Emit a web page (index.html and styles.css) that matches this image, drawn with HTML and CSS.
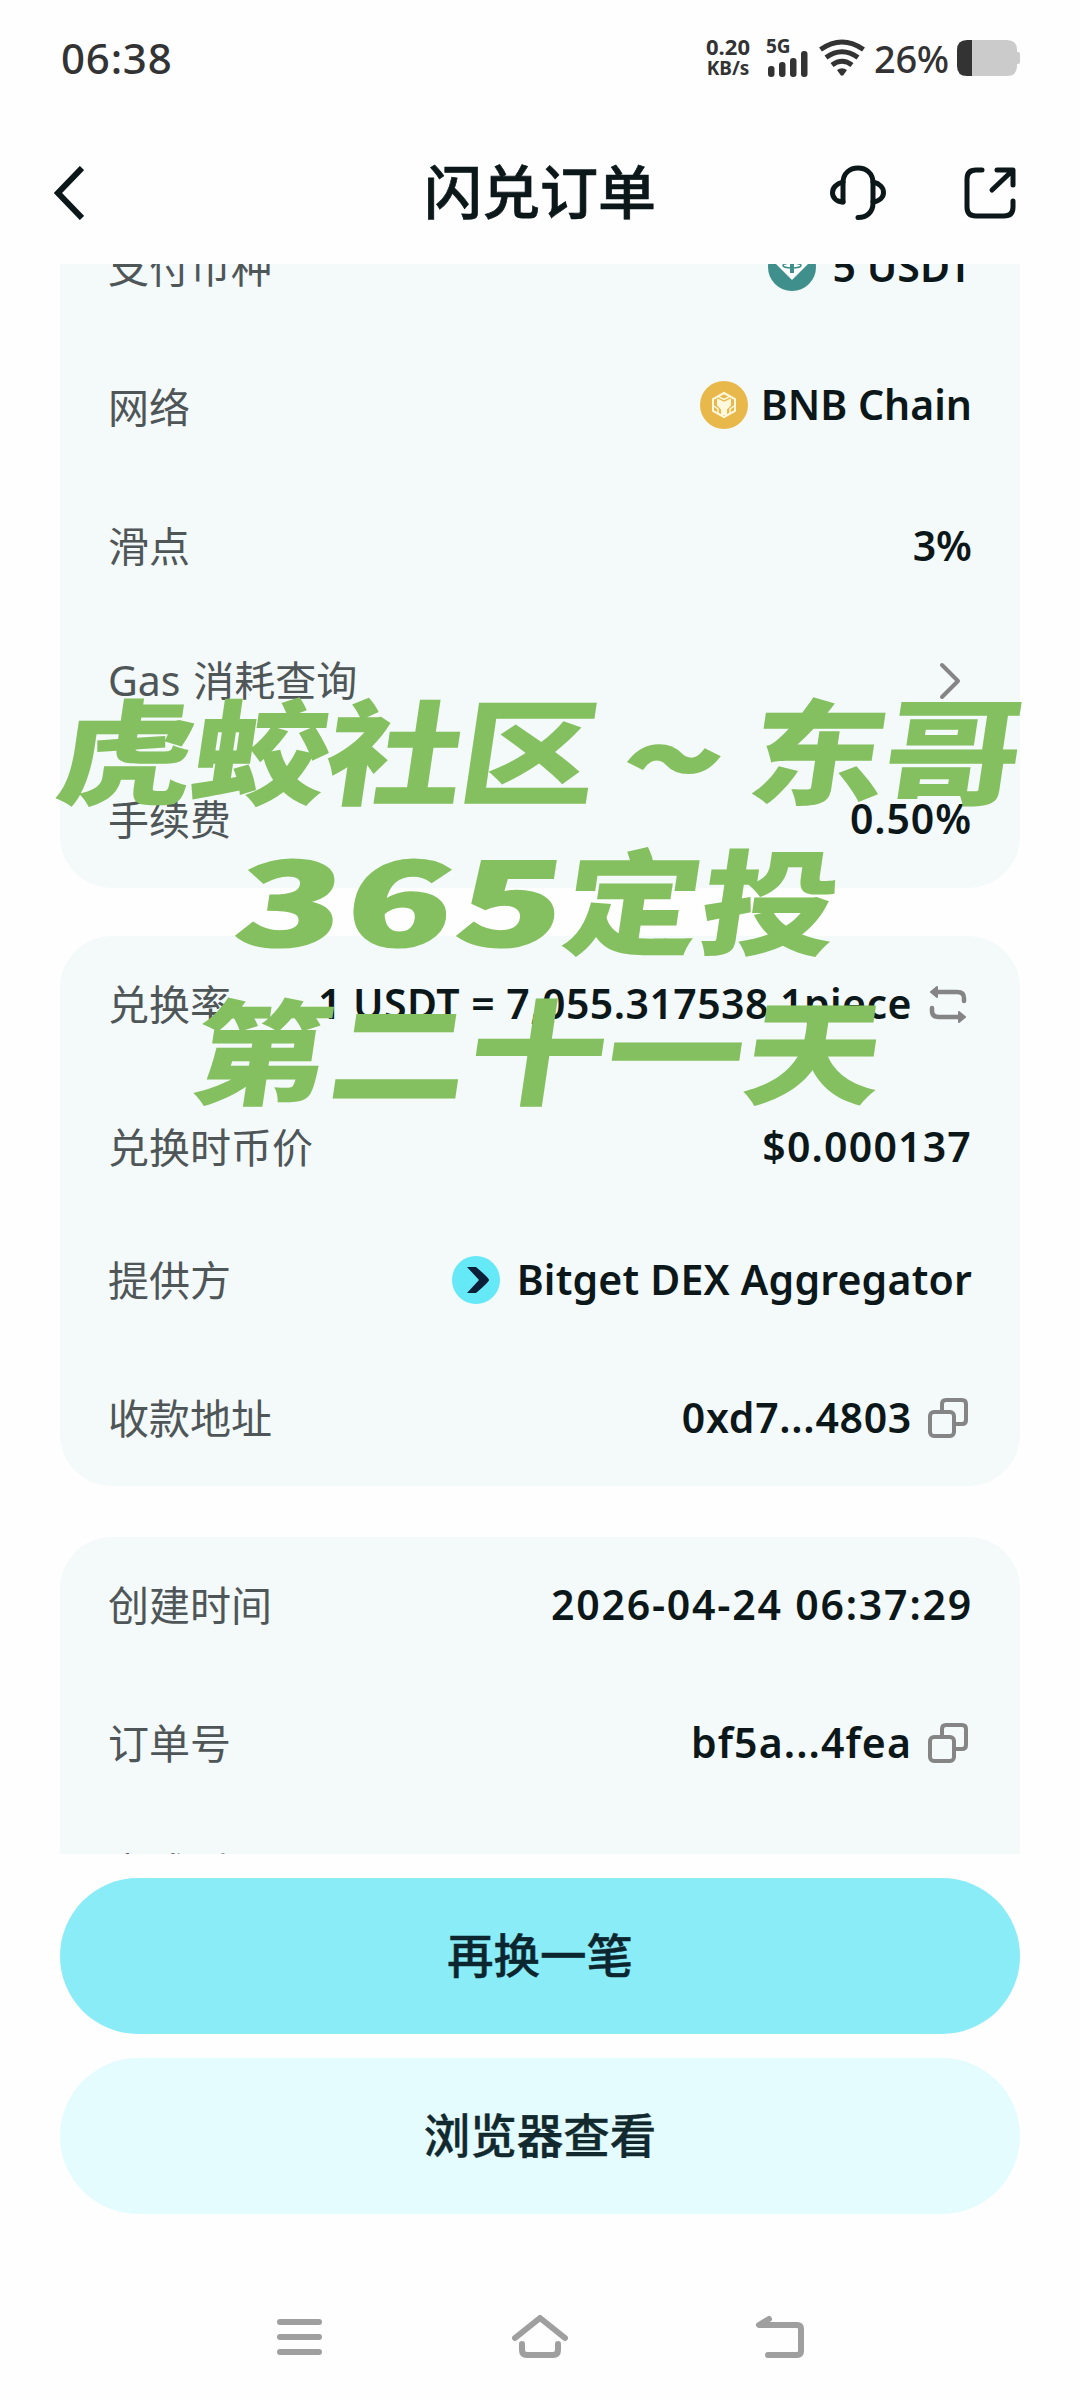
FILE: index.html
```html
<!DOCTYPE html>
<html lang="zh-CN">
<head>
<meta charset="utf-8">
<title>闪兑订单</title>
<link rel="stylesheet" href="styles.css">
</head>
<body>
<div class="screen">
  <header class="status">
    <span class="clock">06:38</span>
    <div class="status-right">
      <div class="speed"><span class="speed-num">0.20</span><span class="speed-unit">KB/s</span></div>
      <div class="signal">
        <span class="gen">5G</span>
        <svg width="40" height="26" viewBox="0 0 40 26" fill="#333"><rect x="0" y="15" width="6.5" height="11" rx="3"/><rect x="11" y="11" width="6.5" height="15" rx="3"/><rect x="22" y="7" width="6.5" height="19" rx="3"/><rect x="33" y="0" width="6.5" height="26" rx="3"/></svg>
      </div>
      <svg class="wifi" width="46" height="38" viewBox="0 0 46 38" fill="none" stroke="#333" stroke-width="5"><path d="M1.500 10.500Q23-4.500 44.500 10.500"/><path d="M7 18.500Q23 7 39 18.500"/><path d="M13 26Q23 18.500 33 26"/><path d="M18 31Q23 27.500 28 31L24.500 36Q23 37.500 21.500 36Z" fill="#333" stroke="none"/></svg>
      <span class="percent">26%</span>
      <svg class="battery" width="63" height="36" viewBox="0 0 63 36"><path d="M10 0H50Q60 0 60 10V12Q63 12 63 14V22Q63 24 60 24V26Q60 36 50 36H10Z" fill="#cbcbcb"/><path d="M15 0H10Q0 0 0 10V26Q0 36 10 36H15Z" fill="#333"/></svg>
    </div>
  </header>
  <nav class="topbar">
    <svg width="30" height="54" viewBox="0 0 30 54" fill="none" stroke="#0b1719" stroke-width="6"><path d="M28 2L4 27L28 52"/></svg>
    <h1>闪兑订单</h1>
    <div class="actions">
      <svg width="56" height="56" viewBox="0 0 56 56" fill="none" stroke="#0b1719" stroke-width="5" stroke-linecap="round" stroke-linejoin="round"><path d="M13 37V18C13 8 20 3 28 3S43 8 43 18V38C43 47 37 52.500 28 52.500"/><path d="M13 17C-1 20-1 36 13 37M43 17C57 20 57 35 43 37"/></svg>
      <svg width="52" height="52" viewBox="0 0 52 52" fill="none" stroke="#0b1719" stroke-width="5" stroke-linecap="round" stroke-linejoin="round"><path d="M18 3H12Q3 3 3 12V40Q3 49 12 49H40Q49 49 49 40V34M33 3H49V18M48 4L28 23"/></svg>
    </div>
  </nav>
  <main class="scroll">
    <section class="card first">
      <div class="row"><span class="label">支付币种</span><span class="value v-usdt">
        <svg class="coin" width="48" height="48" viewBox="0 0 48 48"><circle cx="24" cy="24" r="24" fill="#3f8f8c"/><path d="M12 10H36L41 20L24 37L7 20Z" fill="#fff"/><path d="M16 14H32V19H26V30H22V19H16Z" fill="#3f8f8c"/><ellipse cx="24" cy="22.500" rx="9" ry="2.500" fill="none" stroke="#3f8f8c" stroke-width="1.500"/></svg><b>5 USDT</b></span></div>
      <div class="row network"><span class="label">网络</span><span class="value v-bnb">
        <svg class="coin" width="48" height="48" viewBox="0 0 48 48" fill="none" stroke="#fff8dc" stroke-width="2"><circle cx="24" cy="24" r="24" fill="#e8b84a" stroke="none"/><path d="M24 12L35 18V30L24 36L13 30V18Z"/><path d="M18 19L24 22L30 19V24L26 28V33H22V28L18 24Z" fill="#fff8dc"/><path d="M19 16L24 18.500L29 16M14 25L18 28V32M34 25L30 28V32" stroke-width="1.500"/></svg><b>BNB Chain</b></span></div>
      <div class="row slip"><span class="label">滑点</span><span class="value v-slip"><b>3%</b></span></div>
      <div class="row gas"><span class="label">Gas 消耗查询</span><svg class="more" width="22" height="38" viewBox="0 0 22 38" fill="none" stroke="#858585" stroke-width="4" stroke-linecap="round" stroke-linejoin="round"><path d="M3 3L19 19L3 35"/></svg></div>
      <div class="row"><span class="label">手续费</span><span class="value v-fee"><b>0.50%</b></span></div>
    </section>
    <section class="card second">
      <div class="row"><span class="label">兑换率</span><span class="value v-rate"><b>1 USDT = 7,055.317538 1piece</b>
        <svg class="tail" width="40" height="40" viewBox="0 0 40 40" fill="none" stroke="#858585" stroke-width="4.500" stroke-linecap="round"><path d="M7 8H29Q36 8 36 14V17M33 33H11Q4 33 4 27V24"/><path d="M3 8L9 3V13ZM37 33L31 28V38Z" fill="#858585" stroke-width="2" stroke-linejoin="round"/></svg></span></div>
      <div class="row price"><span class="label">兑换时币价</span><span class="value v-price"><b>$0.000137</b></span></div>
      <div class="row provider"><span class="label">提供方</span><span class="value v-dex">
        <svg class="coin" width="48" height="48" viewBox="0 0 48 48"><circle cx="24" cy="24" r="24" fill="#66e9f6"/><path d="M15 11H24Q37 22 37 24Q37 26 24 37H15L27 24Z" fill="#0b1f38"/></svg><b>Bitget DEX Aggregator</b></span></div>
      <div class="row"><span class="label">收款地址</span><span class="value v-addr"><b>0xd7...4803</b>
        <svg class="tail" width="40" height="40" viewBox="0 0 40 40" fill="none" stroke="#858585" stroke-width="4"><rect x="2" y="14" width="24" height="24" rx="4"/><path d="M14 13V6Q14 2 18 2H34Q38 2 38 6V22Q38 26 34 26H27"/></svg></span></div>
    </section>
    <section class="card third">
      <div class="row"><span class="label">创建时间</span><span class="value v-date"><b>2026-04-24 06:37:29</b></span></div>
      <div class="row"><span class="label">订单号</span><span class="value v-order"><b>bf5a...4fea</b>
        <svg class="tail" width="40" height="40" viewBox="0 0 40 40" fill="none" stroke="#858585" stroke-width="4"><rect x="2" y="14" width="24" height="24" rx="4"/><path d="M14 13V6Q14 2 18 2H34Q38 2 38 6V22Q38 26 34 26H27"/></svg></span></div>
      <div class="row last"><span class="label">完成时间</span></div>
    </section>
  </main>
  <footer class="buttons">
    <button class="btn primary">再换一笔</button>
    <button class="btn secondary">浏览器查看</button>
  </footer>
  <nav class="sysnav">
    <svg width="56" height="44" viewBox="0 0 56 44" stroke="#9f9f9f" stroke-width="6" stroke-linecap="round"><path d="M8 7H47M8 22H47M8 37H47"/></svg>
    <svg width="56" height="44" viewBox="0 0 56 44" fill="none" stroke="#9f9f9f" stroke-width="6" stroke-linecap="round" stroke-linejoin="round"><path d="M3 23L28 3L53 23M10 29V35Q10 40 15 40H41Q46 40 46 35V29"/></svg>
    <svg width="56" height="44" viewBox="0 0 56 44" fill="none" stroke="#9f9f9f" stroke-width="6" stroke-linecap="round" stroke-linejoin="round"><path d="M17 4L7 10H45Q49 10 49 14V36Q49 40 45 40H16"/></svg>
  </nav>
  <div class="stamp">
    <p class="s1">虎蛟社区<span class="wave">～</span>东哥</p>
    <p class="s2"><span class="digits">365</span>定投</p>
    <p class="s3">第二十一天</p>
  </div>
</div>
</body>
</html>
```
FILE: styles.css
```css
* { box-sizing: border-box; }
body { margin: 0; background: #fefefe; font-family: "Noto Sans", "Noto Sans CJK SC", sans-serif; color: #0b1719; }
svg { display: block; flex: none; }
.screen { position: relative; width: 1080px; height: 2400px; overflow: hidden; display: flex; flex-direction: column; }

.status { height: 116px; padding: 0 60px; display: flex; justify-content: space-between; align-items: center; color: #333; font-weight: 500; }
.clock { font-size: 42px; line-height: 60px; letter-spacing: 0.8px; font-weight: 550; padding-left: 1px; margin-top: -1px; }
.status-right { display: flex; align-items: center; }
.speed { width: 46px; display: flex; flex-direction: column; align-items: center; font-weight: 700; margin-right: 17px; margin-top: -3px; }
.speed-num { font-size: 22px; line-height: 22px; }
.speed-unit { font-size: 19px; line-height: 22px; }
.signal { width: 42px; height: 38px; display: flex; flex-direction: column; margin-right: 9px; }
.gen { font-size: 19px; line-height: 15px; height: 12px; font-weight: 700; margin-left: -2px; }
.wifi { margin-right: 9px; }
.percent { width: 74px; font-size: 38px; line-height: 50px; margin-right: 9px; letter-spacing: -0.3px; }

.topbar { height: 148px; padding: 6px 65px 0 54px; display: grid; grid-template-columns: 1fr auto 1fr; align-items: center; }
.topbar h1 { margin: -8px 0 0 11px; font: 500 58px/80px "Noto Sans CJK SC", sans-serif; -webkit-text-stroke: 0.7px #0b1719; }
.actions { display: flex; justify-content: flex-end; align-items: center; gap: 78px; margin-right: -1px; }

.scroll { height: 1590px; padding: 0 60px; overflow: hidden; }
.card { background: #f4f9fa; padding: 0 48px; }
.first { height: 624px; border-radius: 0 0 52px 52px; overflow: hidden; }
.first .row:first-child { margin-top: -21px; }
.second { height: 550px; margin-top: 48px; border-radius: 52px; padding-top: 44px; }
.third { height: 400px; margin-top: 51px; border-radius: 52px; padding-top: 44px; }
.row { height: 48px; margin-top: 90px; display: flex; align-items: center; justify-content: space-between; }
.second .row:first-child, .third .row:first-child { margin-top: 0; }
.row.slip { margin-top: 93px; }
.row.gas { margin-top: 87px; }
.row.price { margin-top: 95px; }
.row.provider { margin-top: 85px; }
.row.last { margin-top: 81px; }
.label { font: 400 41px/48px "Noto Sans", "Noto Sans CJK SC", sans-serif; color: #4f5657; white-space: nowrap; }
.network .label { padding-top: 3px; }
.gas .label { word-spacing: 2px; margin-top: -2px; }
.value { display: flex; align-items: center; white-space: nowrap; }
.value b { font-size: 41px; line-height: 48px; font-weight: 600; margin-top: -2px; }
.v-fee b { letter-spacing: 0.9px; }
.v-rate b { letter-spacing: 0.45px; }
.v-price b { letter-spacing: 1.2px; }
.v-dex b { letter-spacing: 0.2px; }
.v-addr b { letter-spacing: 0.7px; }
.v-date b { letter-spacing: 1.8px; margin-right: -1px; }
.v-order b { letter-spacing: 1.1px; }
.coin { margin-right: 13px; }
.v-usdt .coin, .v-dex .coin { margin-right: 17px; }
.tail { margin-left: 16px; margin-right: 4px; }
.more { margin-right: 11px; }

.buttons { padding: 24px 60px 0; display: flex; flex-direction: column; gap: 24px; }
.btn { height: 156px; border: 0; border-radius: 78px; padding: 0 0 7px; font: 500 46.500px/60px "Noto Sans CJK SC", sans-serif; color: #0c2630; -webkit-text-stroke: 0.4px #0c2630; }
.primary { background: #8aecf7; }
.secondary { background: #e4fcfe; color: #12292e; }

.sysnav { margin-top: 101px; padding: 0 272px; display: flex; justify-content: space-between; }

.stamp { position: absolute; left: 0; top: 672px; width: 1080px; color: #84c05f; font: 900 114px/150px "Noto Sans CJK SC", sans-serif; }
.stamp p { margin: 0; height: 150px; display: flex; justify-content: center; white-space: nowrap; transform: scaleX(1.2) skewX(-7deg); }
.s1 { letter-spacing: -2px; }
.s1 .wave { width: 129px; font-size: 76px; text-align: center; -webkit-text-stroke: 5px #84c05f; padding-top: 8px; }
.digits { transform: scaleX(1.27); margin: 0 26px 0 32px; letter-spacing: 3px; -webkit-text-stroke: 2px #84c05f; }
.s2 { padding-right: 4px; }
.s3 { letter-spacing: 1px; }
```
